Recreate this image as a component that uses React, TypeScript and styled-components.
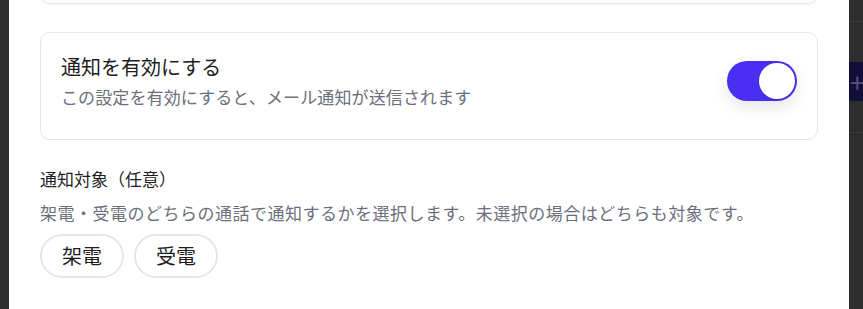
import React, { useState } from 'react';
import styled, { createGlobalStyle } from 'styled-components';

const GlobalStyle = createGlobalStyle`
  html, body {
    margin: 0;
    padding: 0;
    background: #2d2d2d;
    font-family: 'Noto Sans CJK JP', 'Noto Sans', sans-serif;
  }
`;

const Screen = styled.div`
  display: flex;
  height: 309px;
  overflow: hidden;
  background: #2d2d2d;
`;

const LeftEdge = styled.div`
  width: 9px;
  flex: none;
`;

const Panel = styled.div`
  width: 840px;
  flex: none;
  background: #ffffff;
  padding: 0 31px 0 31px;
  box-sizing: border-box;
  overflow: hidden;
`;

const SideRail = styled.div`
  flex: 1;
  display: flex;
  flex-direction: column;
  overflow: hidden;
`;

const RailCell = styled.div<{ $h: number; $navy?: boolean; $line?: boolean }>`
  height: ${(p) => p.$h}px;
  flex: none;
  box-sizing: border-box;
  border-bottom: ${(p) => (p.$line ? '1px solid #3b3b3b' : 'none')};
  background: ${(p) => (p.$navy ? '#110e3c' : 'transparent')};
  color: #55536e;
  font-size: 26px;
  line-height: ${(p) => p.$h}px;
  padding-left: 1px;
  white-space: nowrap;
`;

const PrevCard = styled.div`
  height: 40px;
  margin-top: -38px;
  border: 1px solid #e6e6ea;
  border-radius: 10px;
  box-shadow: 0 1px 3px rgba(0, 0, 0, 0.05);
`;

const Card = styled.div`
  margin-top: 28px;
  border: 1px solid #e6e6ea;
  border-radius: 10px;
  padding: 20px 20px 30px;
  display: flex;
  align-items: center;
  justify-content: space-between;
`;

const TextBlock = styled.div`
  display: flex;
  flex-direction: column;
  gap: 4px;
`;

const Title = styled.div`
  font-size: 20px;
  line-height: 28px;
  color: #1d1d1f;
`;

const Sub = styled.div`
  font-size: 17px;
  line-height: 24px;
  letter-spacing: 0.12px;
  color: #6b6f7b;
`;

const Track = styled.button<{ $on: boolean }>`
  width: 70px;
  height: 40px;
  border: none;
  border-radius: 20px;
  padding: 2px;
  display: flex;
  justify-content: ${(p) => (p.$on ? 'flex-end' : 'flex-start')};
  background: ${(p) => (p.$on ? '#4a2ff2' : '#d7d7de')};
  box-shadow: 0 6px 16px rgba(0, 0, 0, 0.1);
  cursor: pointer;
`;

const Knob = styled.span`
  width: 36px;
  height: 36px;
  border-radius: 50%;
  background: #ffffff;
  box-shadow: 0 1px 2px rgba(0, 0, 0, 0.15);
`;

const Section = styled.div`
  margin-top: 27px;
`;

const Label = styled.div`
  font-size: 17px;
  line-height: 24px;
  color: #1d1d1f;
`;

const Hint = styled.div`
  margin-top: 10px;
  font-size: 17px;
  line-height: 24px;
  letter-spacing: 0.5px;
  color: #6b6f7b;
  white-space: nowrap;
`;

const Chips = styled.div`
  margin-top: 9px;
  display: flex;
  gap: 10px;
`;

const Chip = styled.button<{ $active: boolean }>`
  height: 44px;
  padding: 0 20px;
  border-radius: 22px;
  border: 2px solid ${(p) => (p.$active ? '#4a2ff2' : '#e6e6ea')};
  background: #ffffff;
  font-family: inherit;
  font-size: 20px;
  line-height: 28px;
  color: #1d1d1f;
  cursor: pointer;
`;

export default function App() {
  const [on, setOn] = useState(true);
  const [targets, setTargets] = useState<string[]>([]);
  const toggle = (t: string) =>
    setTargets((s) => (s.includes(t) ? s.filter((x) => x !== t) : [...s, t]));

  return (
    <>
      <GlobalStyle />
      <Screen>
        <LeftEdge />
        <Panel>
          <PrevCard />
          <Card>
            <TextBlock>
              <Title>通知を有効にする</Title>
              <Sub>この設定を有効にすると、メール通知が送信されます</Sub>
            </TextBlock>
            <Track $on={on} onClick={() => setOn(!on)}>
              <Knob />
            </Track>
          </Card>
          <Section>
            <Label>通知対象（任意）</Label>
            <Hint>架電・受電のどちらの通話で通知するかを選択します。未選択の場合はどちらも対象です。</Hint>
            <Chips>
              {['架電', '受電'].map((t) => (
                <Chip key={t} $active={targets.includes(t)} onClick={() => toggle(t)}>
                  {t}
                </Chip>
              ))}
            </Chips>
          </Section>
        </Panel>
        <SideRail>
          <RailCell $h={22} $line />
          <RailCell $h={40} />
          <RailCell $h={39} $navy>+</RailCell>
          <RailCell $h={32} $line />
        </SideRail>
      </Screen>
    </>
  );
}
